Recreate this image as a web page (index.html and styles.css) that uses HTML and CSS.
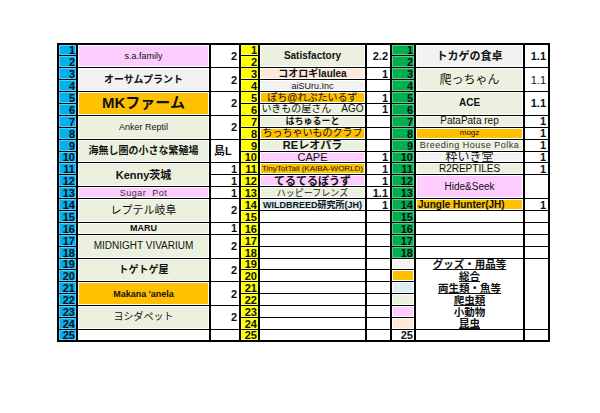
FILE: index.html
```html
<!DOCTYPE html>
<html>
<head>
<meta charset="utf-8">
<link rel="stylesheet" href="styles.css">
</head>
<body>
<table class="sheet">
<colgroup>
<col class="c-n"><col class="c-name1"><col class="c-v1">
<col class="c-n2"><col class="c-name2"><col class="c-v2">
<col class="c-n3"><col class="c-name3"><col class="c-v3">
</colgroup>
<tr>
<td class="n b">1</td><td class="nm pk s9" rowspan="2">s.a.family</td><td class="v" rowspan="2">2</td>
<td class="n y">1</td><td class="nm gn bd s10" rowspan="2">Satisfactory</td><td class="v" rowspan="2">2.2</td>
<td class="n g">1</td><td class="nm gy bd s11" rowspan="2">トカゲの食卓</td><td class="v" rowspan="2">1.1</td>
</tr>
<tr><td class="n b">2</td><td class="n y">2</td><td class="n g">2</td></tr>
<tr>
<td class="n b">3</td><td class="nm gy bd s10" rowspan="2">オーサムプラント</td><td class="v" rowspan="2">2</td>
<td class="n y">3</td><td class="nm pc bd s10">コオロギlaulea</td><td class="v">1</td>
<td class="n g">3</td><td class="nm gn s12" rowspan="2">爬っちゃん</td><td class="v lt" rowspan="2">1.1</td>
</tr>
<tr><td class="n b">4</td><td class="n y">4</td><td class="nm gy s9">aiSUru.Inc</td><td class="v"></td><td class="n g">4</td></tr>
<tr>
<td class="n b">5</td><td class="nm or bd s15" rowspan="2">MKファーム</td><td class="v" rowspan="2">2</td>
<td class="n y">5</td><td class="nm or s10">ぽち@れぷたいるず</td><td class="v">1</td>
<td class="n g">5</td><td class="nm gn bd s10" rowspan="2">ACE</td><td class="v" rowspan="2">1.1</td>
</tr>
<tr><td class="n b">6</td><td class="n y">6</td><td class="nm gn s10">いきもの屋さん　AGO</td><td class="v">1</td><td class="n g">6</td></tr>
<tr>
<td class="n b">7</td><td class="nm gn s9" rowspan="2">Anker Reptil</td><td class="v" rowspan="2">2</td>
<td class="n y">7</td><td class="nm gn bd s9">はちゅるーと</td><td class="v"></td>
<td class="n g">7</td><td class="nm gn s10">PataPata rep</td><td class="v">1</td>
</tr>
<tr>
<td class="n b">8</td>
<td class="n y">8</td><td class="nm or s10">ちっちゃいものクラブ</td><td class="v"></td>
<td class="n g">8</td><td class="nm or s8">mogz</td><td class="v">1</td>
</tr>
<tr>
<td class="n b">9</td><td class="nm gn bd s10" rowspan="2">海無し圏の小さな繁殖場</td><td class="v clip" rowspan="2">島L</td>
<td class="n y">9</td><td class="nm gn bd s11">REレオパラ</td><td class="v"></td>
<td class="n g">9</td><td class="nm gn s9 sp">Breeding House Polka</td><td class="v">1</td>
</tr>
<tr>
<td class="n b">10</td>
<td class="n y">10</td><td class="nm pk s11">CAPE</td><td class="v">1</td>
<td class="n g">10</td><td class="nm gy s12">粋いき堂</td><td class="v">1</td>
</tr>
<tr>
<td class="n b">11</td><td class="nm gn bd s11" rowspan="2">Kenny茨城</td><td class="v">1</td>
<td class="n y">11</td><td class="nm or s8">TinyTotTail (KAIBA-WORLD)</td><td class="v">1</td>
<td class="n g">11</td><td class="nm gn s10">R2REPTILES</td><td class="v">1</td>
</tr>
<tr>
<td class="n b">12</td><td class="v">1</td>
<td class="n y">12</td><td class="nm pk bd s11">てるてるぼうず</td><td class="v">1</td>
<td class="n g">12</td><td class="nm pk s10" rowspan="2">Hide&amp;Seek</td><td class="v" rowspan="2"></td>
</tr>
<tr>
<td class="n b">13</td><td class="nm pk s9 sp">Sugar&nbsp;&nbsp;Pot</td><td class="v">1</td>
<td class="n y">13</td><td class="nm gn s9">ハッピーフレンズ</td><td class="v">1.1</td>
<td class="n g">13</td>
</tr>
<tr>
<td class="n b">14</td><td class="nm gn s11" rowspan="2">レプテル岐阜</td><td class="v" rowspan="2">2</td>
<td class="n y">14</td><td class="nm lb bd s9">WILDBREED研究所(JH)</td><td class="v">1</td>
<td class="n g">14</td><td class="nm or bd s10 left">Jungle Hunter(JH)</td><td class="v">1</td>
</tr>
<tr>
<td class="n b">15</td>
<td class="n y">15</td><td class="nm"></td><td class="v"></td>
<td class="n g">15</td><td class="nm"></td><td class="v"></td>
</tr>
<tr>
<td class="n b">16</td><td class="nm gn bd s9">MARU</td><td class="v">1</td>
<td class="n y">16</td><td class="nm"></td><td class="v"></td>
<td class="n g">16</td><td class="nm"></td><td class="v"></td>
</tr>
<tr>
<td class="n b">17</td><td class="nm gn s10" rowspan="2">MIDNIGHT VIVARIUM</td><td class="v" rowspan="2">2</td>
<td class="n y">17</td><td class="nm"></td><td class="v"></td>
<td class="n g">17</td><td class="nm"></td><td class="v"></td>
</tr>
<tr>
<td class="n b">18</td>
<td class="n y">18</td><td class="nm"></td><td class="v"></td>
<td class="n g">18</td><td class="nm"></td><td class="v"></td>
</tr>
<tr>
<td class="n b">19</td><td class="nm gn bd s10" rowspan="2">トゲトゲ屋</td><td class="v" rowspan="2">2</td>
<td class="n y">19</td><td class="nm"></td><td class="v"></td>
<td class="sw gy"></td><td class="lg">グッズ・用品等</td><td class="v" rowspan="6"></td>
</tr>
<tr>
<td class="n b">20</td>
<td class="n y">20</td><td class="nm"></td><td class="v"></td>
<td class="sw or"></td><td class="lg">総合</td>
</tr>
<tr>
<td class="n b">21</td><td class="nm or bd s9" rowspan="2">Makana 'anela</td><td class="v" rowspan="2">2</td>
<td class="n y">21</td><td class="nm"></td><td class="v"></td>
<td class="sw lb"></td><td class="lg">両生類・魚等</td>
</tr>
<tr>
<td class="n b">22</td>
<td class="n y">22</td><td class="nm"></td><td class="v"></td>
<td class="sw gn"></td><td class="lg">爬虫類</td>
</tr>
<tr>
<td class="n b">23</td><td class="nm gn s10" rowspan="2">ヨシダペット</td><td class="v" rowspan="2">2</td>
<td class="n y">23</td><td class="nm"></td><td class="v"></td>
<td class="sw pk"></td><td class="lg">小動物</td>
</tr>
<tr>
<td class="n b">24</td>
<td class="n y">24</td><td class="nm"></td><td class="v"></td>
<td class="sw pc"></td><td class="lg last">昆虫</td>
</tr>
<tr>
<td class="n b">25</td><td class="nm"></td><td class="v"></td>
<td class="n y">25</td><td class="nm"></td><td class="v"></td>
<td class="n">25</td><td class="nm"></td><td class="v"></td>
</tr>
</table>
</body>
</html>
```
FILE: styles.css
```css
html, body {
  margin: 0;
  padding: 0;
  background: #fff;
}

.sheet {
  border-collapse: collapse;
  table-layout: fixed;
  width: 491px;
  margin: 43px 0 0 57px;
  border: 2px solid #000;
  font-family: "Liberation Sans", "Noto Sans CJK JP", sans-serif;
  color: #111;
}

.c-n { width: 19px; }
.c-name1 { width: 133px; }
.c-v1 { width: 30px; }
.c-n2 { width: 19px; }
.c-name2 { width: 107px; }
.c-v2 { width: 25px; }
.c-n3 { width: 24px; }
.c-name3 { width: 109px; }
.c-v3 { width: 25px; }

.sheet tr {
  height: 11.9px;
}

.sheet td {
  border-top: 1px solid #000;
  border-bottom: 1px solid #000;
  border-left: 2px solid #000;
  border-right: 2px solid #000;
  padding: 0;
  overflow: hidden;
  white-space: nowrap;
  text-align: center;
  vertical-align: middle;
  line-height: 10px;
  font-size: 10px;
}

.n {
  text-align: right !important;
  font-weight: bold;
  font-size: 11px !important;
  line-height: 10px !important;
  padding-right: 1px !important;
  vertical-align: bottom !important;
  box-shadow: inset 0 0 0 1px rgba(255,255,255,0.35);
}
.b { background: #00b0f0; }
.y { background: #ffff00; }
.g { background: #00b050; }

.v {
  text-align: right !important;
  font-weight: bold;
  font-size: 11px !important;
  padding-right: 2px !important;
}
.v.lt { font-weight: normal; }
.v.clip { text-align: left !important; padding-left: 3px !important; }

.nm.pk, .nm.gn, .nm.gy, .nm.or, .nm.pc, .nm.lb {
  box-shadow: inset 0 0 0 1px #fff;
}
.pk { background: #ffccff; }
.gn { background: #ebf1de; }
.gy { background: #f2f2f2; }
.or { background: #ffc000; }
.pc { background: #fde9d9; }
.lb { background: #daeef3; }

.bd { font-weight: bold; }
.s8 { font-size: 8px !important; }
.s9 { font-size: 9px !important; }
.s10 { font-size: 10px !important; }
.s11 { font-size: 11px !important; }
.s12 { font-size: 12px !important; }
.s13 { font-size: 13px !important; }
.s15 { font-size: 15px !important; }
.sp { letter-spacing: 0.5px; color: #333; }
.left { text-align: left !important; padding-left: 2px !important; }

.sw {
  box-shadow: inset 0 0 0 1px #fff;
  border-left: 2px solid #000;
}

.lg {
  font-weight: bold;
  font-size: 10.5px !important;
  text-decoration: underline;
  border-top: none !important;
  border-bottom: none !important;
  line-height: 10px !important;
}
.lg.last {
  border-bottom: 1px solid #000 !important;
}
```
